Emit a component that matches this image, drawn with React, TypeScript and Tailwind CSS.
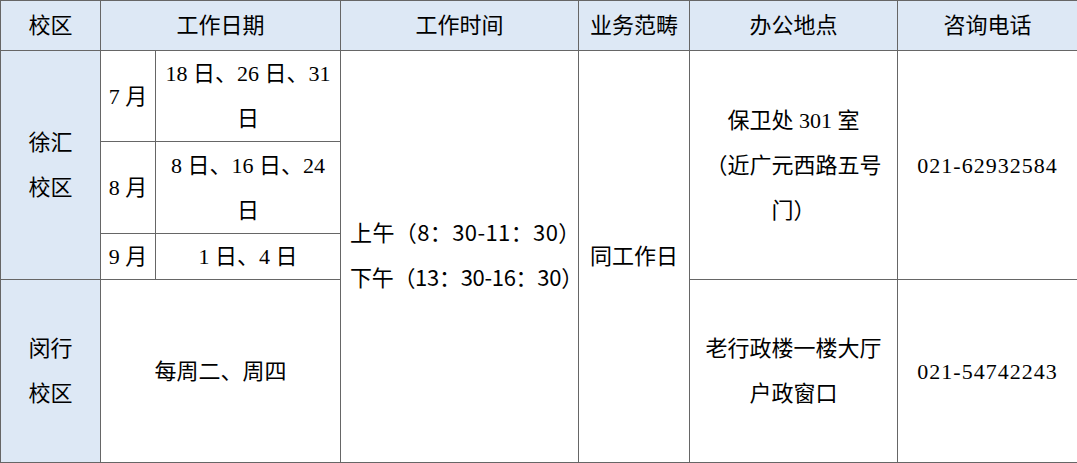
const serif = "font-['Liberation_Serif','Noto_Sans_CJK_SC',serif]";

const cell = `border border-[#666] text-center align-middle p-0 text-[22px] leading-[45px] text-black ${serif}`;
const blue = "bg-[#dde8f5]";

export default function App() {
  return (
    <div className="w-[1077px] h-[463px] bg-white overflow-hidden">
      <table className="w-[1077px] table-fixed border-collapse">
        <colgroup>
          <col className="w-[100px]" />
          <col className="w-[55px]" />
          <col className="w-[185px]" />
          <col className="w-[238px]" />
          <col className="w-[111px]" />
          <col className="w-[208px]" />
          <col className="w-[180px]" />
        </colgroup>
        <tbody>
          <tr className="h-[50px]">
            <td className={`${cell} ${blue}`}>校区</td>
            <td className={`${cell} ${blue}`} colSpan={2}>
              工作日期
            </td>
            <td className={`${cell} ${blue}`}>工作时间</td>
            <td className={`${cell} ${blue}`}>业务范畴</td>
            <td className={`${cell} ${blue}`}>办公地点</td>
            <td className={`${cell} ${blue}`}>咨询电话</td>
          </tr>
          <tr className="h-[91px]">
            <td className={`${cell} ${blue}`} rowSpan={3}>
              徐汇
              <br />
              校区
            </td>
            <td className={cell}>7 月</td>
            <td className={cell}>
              18 日、26 日、31
              <br />
              日
            </td>
            <td className={cell} rowSpan={4}>
              <div className="pl-[9px] -mt-[5px] font-['Noto_Sans_CJK_SC',sans-serif] whitespace-nowrap text-left">
                <div className="tracking-[0.4px]">上午（8：30-11：30）</div>
                <div className="tracking-[-0.3px]">下午（13：30-16：30）</div>
              </div>
            </td>
            <td className={cell} rowSpan={4}>
              同工作日
            </td>
            <td className={cell} rowSpan={3}>
              保卫处 301 室
              <br />
              （近广元西路五号
              <br />
              门）
            </td>
            <td className={`${cell} tracking-[1px]`} rowSpan={3}>
              021-62932584
            </td>
          </tr>
          <tr className="h-[92px]">
            <td className={cell}>8 月</td>
            <td className={cell}>
              8 日、16 日、24
              <br />
              日
            </td>
          </tr>
          <tr className="h-[46px]">
            <td className={cell}>9 月</td>
            <td className={cell}>1 日、4 日</td>
          </tr>
          <tr className="h-[183px]">
            <td className={`${cell} ${blue}`}>
              闵行
              <br />
              校区
            </td>
            <td className={cell} colSpan={2}>
              每周二、周四
            </td>
            <td className={cell}>
              老行政楼一楼大厅
              <br />
              户政窗口
            </td>
            <td className={`${cell} tracking-[1px]`}>021-54742243</td>
          </tr>
        </tbody>
      </table>
    </div>
  );
}
